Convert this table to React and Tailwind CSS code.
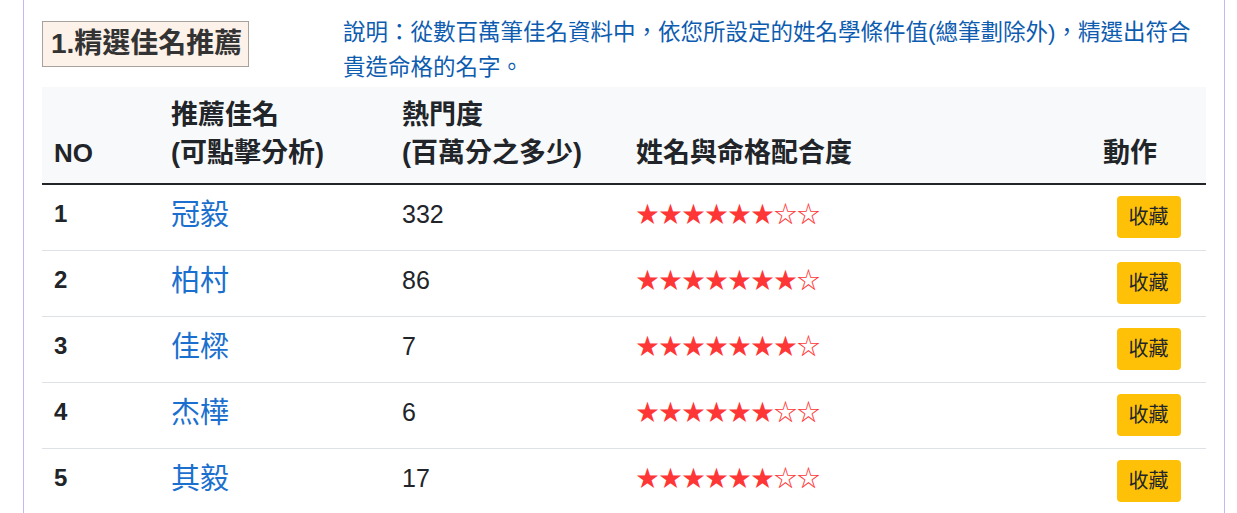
const rows = [
  { no: 1, name: "冠毅", hot: "332", stars: 6 },
  { no: 2, name: "柏村", hot: "86", stars: 7 },
  { no: 3, name: "佳樑", hot: "7", stars: 7 },
  { no: 4, name: "杰樺", hot: "6", stars: 6 },
  { no: 5, name: "其毅", hot: "17", stars: 6 },
];

const font = { fontFamily: "'Liberation Sans', 'Noto Sans CJK TC', sans-serif" };

const Stars = ({ count }) => (
  <span className="text-[#ff3636] text-[23px] leading-[36px]" style={{ fontFamily: "'Noto Sans CJK TC', sans-serif" }}>
    {"★".repeat(count)}
    {"☆".repeat(8 - count)}
  </span>
);

const App = () => {
  return (
    <div className="min-h-[513px] bg-white" style={font}>
      <div className="ml-[23px] w-[1202px] min-h-[513px] border-x border-[#cdb3f6] px-[18px] pt-[15px]">
        <div className="flex">
          <div className="w-[301px] shrink-0 pt-[6px]">
            <div className="inline-block border border-[#a9a19b] bg-[#fdf2e9] pl-[8px] pr-[6px] py-[4px] text-[28px] leading-[36px] font-bold text-[#333]">
              1.精選佳名推薦
            </div>
          </div>
          <p className="flex-1 text-[22.5px] leading-[35px] text-[#0d5cb0]">
            說明：從數百萬筆佳名資料中，依您所設定的姓名學條件值(總筆劃除外)，精選出符合
            <br />
            貴造命格的名字。
          </p>
        </div>

        <div className="mt-[2px] w-[1164px] text-[#212529]">
          <div className="grid grid-cols-[117px_231px_234px_467px_115px] items-end bg-[#f8f9fa] border-b-2 border-[#212529] h-[98px] pb-[11px] text-[27px] leading-[38px] font-bold">
            <div className="px-[12px] text-[26px]">NO</div>
            <div className="px-[12px]">
              推薦佳名
              <br />
              (可點擊分析)
            </div>
            <div className="px-[12px]">
              熱門度
              <br />
              (百萬分之多少)
            </div>
            <div className="px-[12px]">姓名與命格配合度</div>
            <div className="px-[12px]">動作</div>
          </div>

          {rows.map((r) => (
            <div
              key={r.no}
              className="grid grid-cols-[117px_231px_234px_467px_115px] items-start h-[66px] border-b border-[#dee2e6]"
            >
              <div className="px-[12px] pt-[11px] text-[24px] leading-[36px] font-bold">{r.no}</div>
              <div className="px-[12px] pt-[11px] text-[29px] leading-[38px]">
                <a href="#" className="text-[#1b6fce]">{r.name}</a>
              </div>
              <div className="px-[12px] pt-[11px] text-[25px] leading-[36px]">{r.hot}</div>
              <div className="px-[12px] pt-[9px]">
                <Stars count={r.stars} />
              </div>
              <div className="flex justify-center pt-[11px]">
                <button className="h-[42px] w-[64px] rounded-[4px] bg-[#ffc107] text-[20px] text-[#212529]">
                  收藏
                </button>
              </div>
            </div>
          ))}
        </div>
      </div>
    </div>
  );
};

export default App;
